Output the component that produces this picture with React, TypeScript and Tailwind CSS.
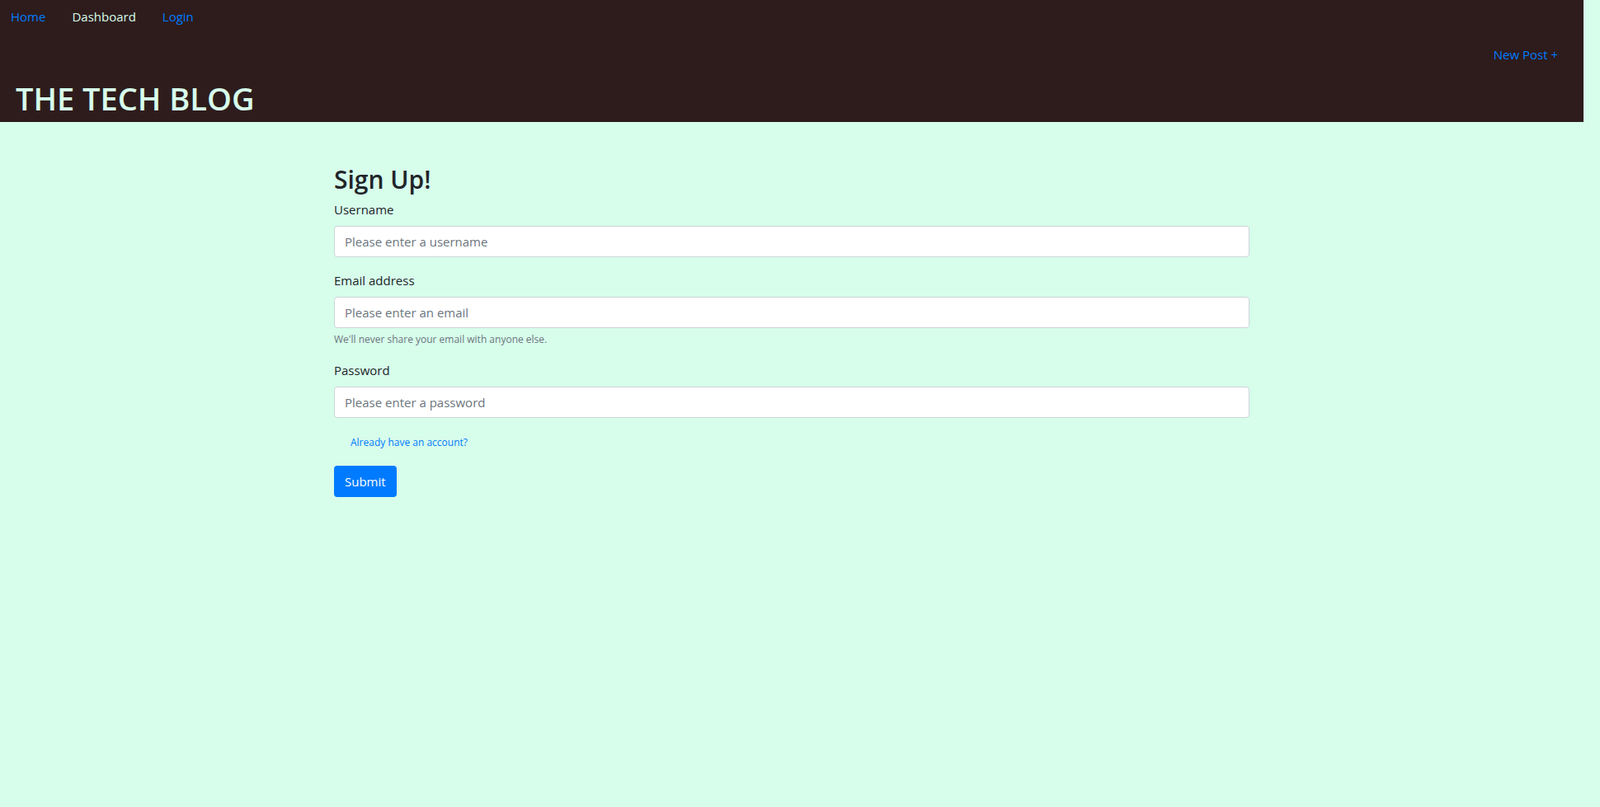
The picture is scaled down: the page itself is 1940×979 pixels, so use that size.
import React, { useState } from 'react';

const font = { fontFamily: '"Open Sans", "Noto Sans", sans-serif' };

const inputClass =
  'block w-full h-[38px] px-3 text-[15px] bg-white border border-[#ced4da] rounded placeholder:text-[#6c757d] outline-none';

export default function App() {
  const [username, setUsername] = useState('');
  const [email, setEmail] = useState('');
  const [password, setPassword] = useState('');

  return (
    <div className="min-h-screen w-full bg-[#d7fdeb] text-[#212529]" style={font}>
      <header className="w-[1920px] h-[148px] bg-[#2e1c1c] flex flex-col">
        <nav className="flex h-[40px]">
          <a href="#" className="px-4 py-2 text-[15px] leading-6 text-[#007bff] -ml-[3px]">Home</a>
          <a href="#" className="px-4 py-2 text-[15px] leading-6 text-[#d7fdeb]">Dashboard</a>
          <a href="#" className="px-4 py-2 text-[15px] leading-6 text-[#007bff]">Login</a>
        </nav>
        <div className="flex justify-end pr-[15px] mt-[6px]">
          <a href="#" className="px-4 py-2 text-[15px] leading-6 text-[#007bff]">New Post +</a>
        </div>
        <h1 className="mt-[9px] pl-[19px] text-[38px] leading-[48px] font-semibold text-[#d7fdeb]">THE TECH BLOG</h1>
      </header>

      <main className="w-[1920px] flex justify-center pt-12">
        <form className="w-[1140px] px-[15px]" onSubmit={(e) => e.preventDefault()}>
          <h2 className="pt-[3px] mb-[5px] text-[30px] leading-[38px] font-semibold">Sign Up!</h2>

          <div className="mb-4">
            <label className="block text-[15px] leading-6 mb-2">Username</label>
            <input
              type="text"
              value={username}
              onChange={(e) => setUsername(e.target.value)}
              placeholder="Please enter a username"
              className={inputClass}
            />
          </div>

          <div className="mb-4">
            <label className="block text-[15px] leading-6 mb-2">Email address</label>
            <input
              type="email"
              value={email}
              onChange={(e) => setEmail(e.target.value)}
              placeholder="Please enter an email"
              className={inputClass}
            />
            <small className="block mt-1 text-[12px] leading-[19px] text-[#6c757d]">We'll never share your email with anyone else.</small>
          </div>

          <div className="mb-4">
            <label className="block text-[15px] leading-6 mb-2">Password</label>
            <input
              type="password"
              value={password}
              onChange={(e) => setPassword(e.target.value)}
              placeholder="Please enter a password"
              className={inputClass}
            />
          </div>

          <div className="mb-4 pl-5 text-[15px] leading-6">
            <a href="#" className="text-[12px] text-[#007bff]">Already have an account?</a>
          </div>

          <button type="submit" className="h-[38px] px-[13px] text-[15px] text-white bg-[#007bff] rounded">Submit</button>
        </form>
      </main>
    </div>
  );
}
